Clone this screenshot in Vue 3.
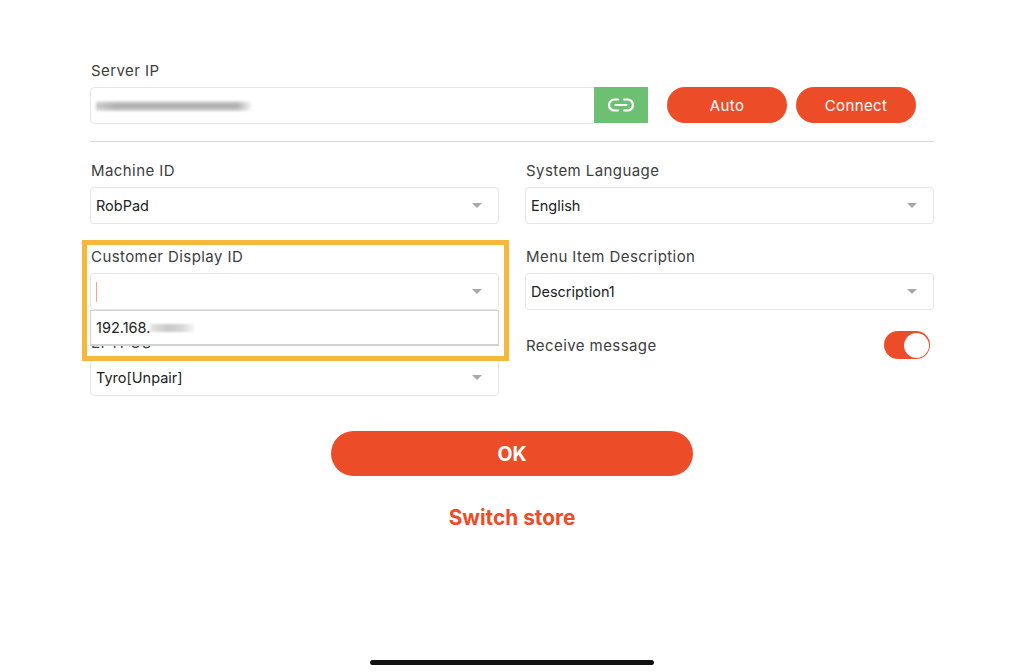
<script setup>
const leftRows = [
  { label: 'Machine ID', value: 'RobPad' },
  { label: 'Customer Display ID', value: '', open: true },
  { label: 'EFTPOS', value: 'Tyro[Unpair]' },
]
const rightRows = [
  { label: 'System Language', value: 'English' },
  { label: 'Menu Item Description', value: 'Description1' },
]
</script>

<template>
  <div class="page">
    <main class="form">
      <div class="label">Server IP</div>
      <div class="server-row">
        <div class="server-input"><span class="smear smear-long"></span></div>
        <button class="link-btn" aria-label="Link">
          <svg width="28" height="16" viewBox="0 0 28 16" fill="none" stroke="#fff" stroke-width="2.2" stroke-linecap="round">
            <path d="M11 2.5H7.5a5.5 5.5 0 0 0 0 11H11" />
            <path d="M17 2.5h3.5a5.5 5.5 0 0 1 0 11H17" />
            <path d="M8.5 8h11" />
          </svg>
        </button>
        <button class="pill first">Auto</button>
        <button class="pill">Connect</button>
      </div>
      <div class="divider"></div>

      <div class="columns">
        <div class="column">
          <div v-for="row in leftRows" :key="row.label" class="field">
            <div class="label">{{ row.label }}</div>
            <div class="select">
              <span v-if="row.open" class="caret"></span>
              <span>{{ row.value }}</span>
              <i class="arrow"></i>
              <div v-if="row.open" class="menu">192.168.<span class="smear smear-short"></span></div>
            </div>
          </div>
          <div class="highlight"></div>
        </div>
        <div class="column">
          <div v-for="row in rightRows" :key="row.label" class="field">
            <div class="label">{{ row.label }}</div>
            <div class="select">
              <span>{{ row.value }}</span>
              <i class="arrow"></i>
            </div>
          </div>
          <div class="toggle-row">
            <span class="label">Receive message</span>
            <span class="toggle"><span class="knob"></span></span>
          </div>
        </div>
      </div>

      <div class="actions">
        <button class="ok">OK</button>
        <button class="switch">Switch store</button>
      </div>
    </main>
    <div class="home-bar"></div>
  </div>
</template>

<style>
html, body { margin: 0; background: #fff; }
</style>

<style scoped>
.page {
  position: relative;
  width: 1024px;
  height: 672px;
  overflow: hidden;
  background: #fff;
  font-family: Inter, "Liberation Sans", sans-serif;
  color: #222;
}
.form {
  width: 844px;
  margin-left: 90px;
  padding-top: 60px;
}
.label {
  box-sizing: border-box;
  height: 20px;
  padding: 1px 0 0 1px;
  font-size: 15px;
  line-height: 19px;
  letter-spacing: 0.42px;
  color: #3d3d3d;
}
.server-row {
  display: flex;
  align-items: flex-start;
  margin-top: 7px;
}
.server-input {
  box-sizing: border-box;
  width: 505px;
  height: 37px;
  display: flex;
  align-items: center;
  padding-left: 5px;
  border: 1px solid #e6e6e6;
  border-radius: 4px 0 0 4px;
}
.smear {
  display: inline-block;
  height: 10px;
  filter: blur(1px);
  background:
    linear-gradient(90deg, rgba(255, 255, 255, 0.35), rgba(255, 255, 255, 0) 12%, rgba(255, 255, 255, 0) 90%, #fff),
    linear-gradient(180deg, #dedede, #a9a9a9 45%, #cfcfcf);
}
.smear-long { width: 157px; }
.smear-short {
  width: 44px;
  height: 8px;
  background: linear-gradient(90deg, #e4e4e4, #c8c8c8 40%, #d8d8d8 75%, #f6f6f6);
}
.link-btn {
  width: 54px;
  height: 36px;
  margin-left: -1px;
  padding: 0;
  border: 0;
  background: #6dc071;
  display: flex;
  align-items: center;
  justify-content: center;
}
.pill {
  width: 120px;
  height: 36px;
  margin-left: 9px;
  padding: 0;
  border: 0;
  border-radius: 18px;
  background: #ec4c27;
  color: #fff;
  font: 400 15px Inter, "Liberation Sans", sans-serif;
  letter-spacing: 0.4px;
}
.pill.first { margin-left: 19px; }
.divider {
  height: 1px;
  margin: 17px 0 18px;
  background: #d9d9d9;
}
.columns {
  display: grid;
  grid-template-columns: 409px 409px;
  column-gap: 26px;
}
.column { position: relative; }
.field { margin-bottom: 22px; }
.select {
  position: relative;
  box-sizing: border-box;
  height: 37px;
  margin-top: 7px;
  display: flex;
  align-items: center;
  padding-left: 5px;
  border: 1px solid #e6e6e6;
  border-radius: 4px;
  font-size: 14.5px;
  color: #222;
}
.arrow {
  position: absolute;
  right: 16px;
  top: 15px;
  width: 0;
  height: 0;
  border-left: 5px solid transparent;
  border-right: 5px solid transparent;
  border-top: 5px solid #a8a8a8;
}
.caret {
  width: 1px;
  height: 20px;
  background: #f3a48c;
}
.menu {
  position: absolute;
  z-index: 2;
  left: -1px;
  right: -1px;
  top: 36px;
  box-sizing: border-box;
  height: 36px;
  padding-left: 5px;
  display: flex;
  align-items: center;
  background: #fff;
  border: 1px solid #d2d2d2;
  border-bottom-width: 2px;
  font-size: 14.5px;
}
.highlight {
  position: absolute;
  z-index: 3;
  box-sizing: border-box;
  left: -8px;
  top: 80px;
  width: 427px;
  height: 121px;
  border: 5px solid #f5b83d;
  pointer-events: none;
}
.toggle-row {
  display: flex;
  align-items: center;
  justify-content: space-between;
  height: 28px;
  margin-top: -1px;
  padding-right: 4px;
}
.toggle {
  position: relative;
  width: 46px;
  height: 28px;
  border-radius: 14px;
  background: #ec4c27;
}
.knob {
  position: absolute;
  right: 1.5px;
  top: 1.5px;
  width: 25px;
  height: 25px;
  border-radius: 50%;
  background: #fff;
}
.actions {
  display: flex;
  flex-direction: column;
  align-items: center;
  margin-top: 13px;
}
.ok {
  width: 362px;
  height: 45px;
  padding: 0;
  border: 0;
  border-radius: 23px;
  background: #ec4c27;
  color: #fff;
  font: 700 19.5px Inter, "Liberation Sans", sans-serif;
}
.switch {
  margin-top: 30px;
  padding: 0;
  border: 0;
  background: none;
  color: #ec4c27;
  font: 700 20.8px/24px Inter, "Liberation Sans", sans-serif;
}
.home-bar {
  position: absolute;
  left: 370px;
  top: 660px;
  width: 284px;
  height: 5px;
  border-radius: 3px;
  background: #111;
}
</style>
